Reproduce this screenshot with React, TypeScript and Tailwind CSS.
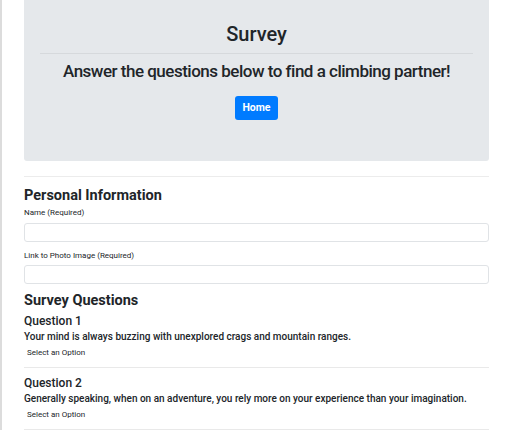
export default function App() {
  const questions = [
    "Your mind is always buzzing with unexplored crags and mountain ranges.",
    "Generally speaking, when on an adventure, you rely more on your experience than your imagination.",
  ]

  return (
    <div className="h-[430px] overflow-hidden border-l-2 border-[#dcdcdc] bg-white font-['Roboto','Liberation_Sans',Arial,sans-serif] text-[#212529]">
      <div className="ml-[22px] w-[465px]">
        <div className="rounded-b-[3px] bg-[#e5e8eb] px-4 pb-[41px] pt-[21px] text-center">
          <h1 className="text-[20px] font-medium leading-[26px]">Survey</h1>
          <hr className="mb-[5px] mt-[6px] border-t border-[#d6d9dc]" />
          <p className="text-[17px] font-medium leading-[24px] tracking-[-0.5px]">
            Answer the questions below to find a climbing partner!
          </p>
          <button className="mt-[13px] h-[24px] rounded-[3px] bg-[#007bff] px-[7px] text-[10.5px] font-bold text-white">
            Home
          </button>
        </div>

        <hr className="mt-[15px] border-t border-[#ececec]" />

        <section className="pt-[10px]">
          <h2 className="text-[14.5px] font-bold leading-[18px]">Personal Information</h2>
          <label className="mt-[3px] block text-[8px] leading-[10px]">Name (Required)</label>
          <input className="mt-[5px] block h-[19px] w-full rounded-[3px] border border-[#e0e3e6]" />
          <label className="mt-[9px] block text-[8px] leading-[10px]">
            Link to Photo Image (Required)
          </label>
          <input className="mt-[4px] block h-[19px] w-full rounded-[3px] border border-[#e0e3e6]" />
        </section>

        <section className="pt-[8px]">
          <h2 className="text-[14.5px] font-bold leading-[18px]">Survey Questions</h2>
          {questions.map((q, i) => (
            <div key={i} className="border-b border-[#e9e9e9] pb-[9px] pt-[3px] [&+div]:pt-[7px]">
              <h3 className="text-[12px] font-medium leading-[16px]">Question {i + 1}</h3>
              <p className="mt-[1px] text-[10px] font-medium leading-[14px]">{q}</p>
              <p className="mt-[4px] pl-[3px] text-[8px] leading-[10px]">Select an Option</p>
            </div>
          ))}
        </section>
      </div>
    </div>
  )
}
